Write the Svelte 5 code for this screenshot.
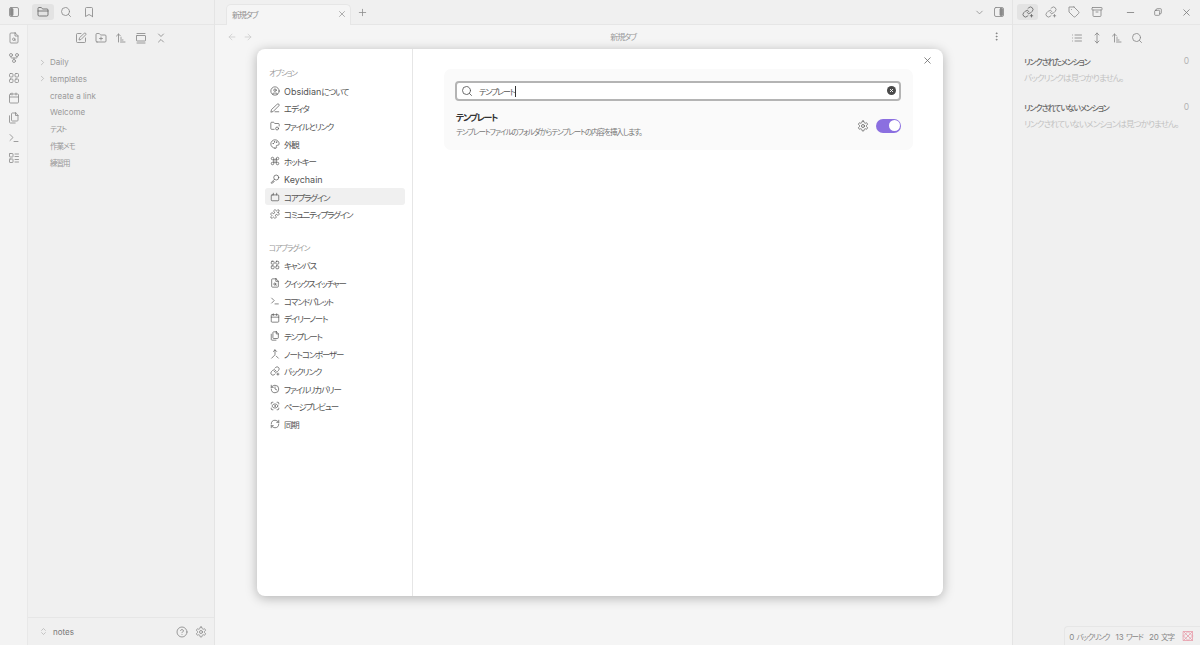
<script>
  const paths = {
    folder: '<path d="M20 20a2 2 0 0 0 2-2V8a2 2 0 0 0-2-2h-7.9a2 2 0 0 1-1.69-.9L9.6 3.9A2 2 0 0 0 7.93 3H4a2 2 0 0 0-2 2v13a2 2 0 0 0 2 2Z"/><path d="M2 10h20"/>',
    search: '<circle cx="11" cy="11" r="8"/><path d="m21 21-4.3-4.3"/>',
    bookmark: '<path d="m19 21-7-4-7 4V5a2 2 0 0 1 2-2h10a2 2 0 0 1 2 2v16z"/>',
    sidebarL: '<rect x="3" y="3" width="18" height="18" rx="3"/><rect x="5" y="5" width="5" height="14" rx="1" fill="currentColor"/>',
    sidebarR: '<rect x="3" y="3" width="18" height="18" rx="3"/><rect x="14" y="5" width="5" height="14" rx="1" fill="currentColor"/>',
    switcher: '<path d="M14.5 2H6a2 2 0 0 0-2 2v16a2 2 0 0 0 2 2h12a2 2 0 0 0 2-2V7.5L14.5 2z"/><path d="M14 2v6h6"/><circle cx="11.5" cy="14.5" r="2.5"/><path d="m13.3 16.3 1.7 1.7"/>',
    graph: '<circle cx="12" cy="18" r="3"/><circle cx="6" cy="6" r="3"/><circle cx="18" cy="6" r="3"/><path d="M18 9v2c0 .6-.4 1-1 1H7c-.6 0-1-.4-1-1V9"/><path d="M12 12v3"/>',
    canvas: '<rect x="3" y="3" width="7" height="7" rx="2"/><rect x="14" y="3" width="7" height="7" rx="2"/><rect x="3" y="14" width="7" height="7" rx="2"/><rect x="14" y="14" width="7" height="7" rx="2"/>',
    calendar: '<rect x="3" y="4" width="18" height="18" rx="2"/><path d="M16 2v4M8 2v4M3 10h18"/>',
    files: '<path d="M15.5 2H8.6c-.4 0-.8.2-1.1.5-.3.3-.5.7-.5 1.1v12.8c0 .4.2.8.5 1.1.3.3.7.5 1.1.5h9.8c.4 0 .8-.2 1.1-.5.3-.3.5-.7.5-1.1V6.5L15.5 2z"/><path d="M3 7.6v12.8c0 .4.2.8.5 1.1.3.3.7.5 1.1.5h9.8"/><path d="M15 2v5h5"/>',
    terminal: '<path d="m4 17 6-6-6-6"/><path d="M12 19h8"/>',
    bases: '<rect x="3" y="3" width="7" height="7" rx="1"/><rect x="3" y="14" width="7" height="7" rx="1"/><path d="M14 4h7M14 9h7M14 15h7M14 20h7"/>',
    edit: '<path d="M12 3H5a2 2 0 0 0-2 2v14a2 2 0 0 0 2 2h14a2 2 0 0 0 2-2v-7"/><path d="M18.375 2.625a2.121 2.121 0 1 1 3 3L12 15l-4 1 1-4Z"/>',
    folderPlus: '<path d="M4 20h16a2 2 0 0 0 2-2V8a2 2 0 0 0-2-2h-7.93a2 2 0 0 1-1.66-.9l-.82-1.2A2 2 0 0 0 7.93 3H4a2 2 0 0 0-2 2v13c0 1.1.9 2 2 2Z"/><path d="M12 10v6M9 13h6"/>',
    sort: '<path d="m3 8 4-4 4 4"/><path d="M7 4v16"/><path d="M11 12h2M11 16h5M11 20h9"/>',
    reveal: '<path d="M4 3h16"/><rect x="3" y="7" width="18" height="11" rx="1"/><path d="M4 22h16"/>',
    collapse: '<path d="m7 20 5-5 5 5"/><path d="m7 4 5 5 5-5"/>',
    chevronRight: '<path d="m9 18 6-6-6-6"/>',
    chevronDown: '<path d="m6 9 6 6 6-6"/>',
    x: '<path d="M18 6 6 18M6 6l12 12"/>',
    plus: '<path d="M5 12h14M12 5v14"/>',
    arrowLeft: '<path d="m12 19-7-7 7-7"/><path d="M19 12H5"/>',
    arrowRight: '<path d="M5 12h14"/><path d="m12 5 7 7-7 7"/>',
    more: '<circle cx="12" cy="5" r="1"/><circle cx="12" cy="12" r="1"/><circle cx="12" cy="19" r="1"/>',
    backlink: '<path d="M10 13a5 5 0 0 0 7.54.54l3-3a5 5 0 0 0-7.07-7.07l-1.72 1.71"/><path d="M14 11a5 5 0 0 0-7.54-.54l-3 3a5 5 0 0 0 7.07 7.07l1.71-1.71"/><path d="M19 17v5M16.5 19.5h5"/>',
    tag: '<path d="M12 2H2v10l9.29 9.29c.94.94 2.48.94 3.42 0l6.58-6.58c.94-.94.94-2.48 0-3.42L12 2Z"/><path d="M7 7h.01"/>',
    archive: '<rect x="2" y="3" width="20" height="5" rx="1"/><path d="M4 8v11a2 2 0 0 0 2 2h12a2 2 0 0 0 2-2V8"/><path d="M10 12h4"/>',
    minus: '<path d="M5 12h14"/>',
    restore: '<rect x="4" y="8" width="12" height="12" rx="2"/><path d="M8 8V6a2 2 0 0 1 2-2h8a2 2 0 0 1 2 2v8a2 2 0 0 1-2 2h-2"/>',
    list: '<path d="M8 6h13M8 12h13M8 18h13M3 6h.01M3 12h.01M3 18h.01"/>',
    updown: '<path d="M12 2v20"/><path d="m8 18 4 4 4-4"/><path d="m8 6 4-4 4 4"/>',
    user: '<circle cx="12" cy="12" r="10"/><circle cx="12" cy="10" r="3"/><path d="M7 20.662V19a2 2 0 0 1 2-2h6a2 2 0 0 1 2 2v1.662"/>',
    pencil: '<path d="M17 3a2.85 2.83 0 1 1 4 4L7.5 20.5 2 22l1.5-5.5Z"/><path d="M12 21h9"/>',
    folderLink: '<path d="M10 20H4a2 2 0 0 1-2-2V5a2 2 0 0 1 2-2h3.93a2 2 0 0 1 1.66.9l.82 1.2a2 2 0 0 0 1.66.9H20a2 2 0 0 1 2 2v4"/><circle cx="17" cy="18" r="3.5"/>',
    palette: '<path d="M12 22a10 10 0 1 1 10-10c0 2-1.5 3-3 3h-2a2 2 0 0 0-1.5 3.3c.4.5.5 1 .5 1.5 0 1.5-1.5 2.2-4 2.2z"/><circle cx="7.5" cy="11" r=".6"/><circle cx="10.5" cy="7" r=".6"/><circle cx="15.5" cy="7.5" r=".6"/>',
    command: '<path d="M15 6v12a3 3 0 1 0 3-3H6a3 3 0 1 0 3 3V6a3 3 0 1 0-3 3h12a3 3 0 1 0-3-3"/>',
    key: '<circle cx="15" cy="8.5" r="6"/><path d="M10.5 13 3 20.5V22h3l1-1v-2h2l1.5-1.5"/>',
    core: '<rect x="3" y="7" width="18" height="14" rx="2"/><path d="M8 3v4M16 3v4"/>',
    puzzle: '<path d="M19.439 7.85c-.049.322.059.648.289.878l1.568 1.568c.47.47.706 1.087.706 1.704s-.235 1.233-.706 1.704l-1.611 1.611a.98.98 0 0 1-.837.276c-.47-.07-.802-.48-.968-.925a2.501 2.501 0 1 0-3.214 3.214c.446.166.855.497.925.968a.979.979 0 0 1-.276.837l-1.61 1.61a2.404 2.404 0 0 1-1.705.707 2.402 2.402 0 0 1-1.704-.706l-1.568-1.568a1.026 1.026 0 0 0-.877-.29c-.493.074-.84.504-1.02.968a2.5 2.5 0 1 1-3.237-3.237c.464-.18.894-.527.967-1.02a1.026 1.026 0 0 0-.289-.877l-1.568-1.568A2.402 2.402 0 0 1 1.998 12c0-.617.236-1.234.706-1.704L4.23 8.77c.24-.24.581-.353.917-.303.515.077.877.528 1.073 1.01a2.5 2.5 0 1 0 3.259-3.259c-.482-.196-.933-.558-1.01-1.073-.05-.336.062-.676.303-.917l1.525-1.525A2.402 2.402 0 0 1 12 1.998c.617 0 1.234.236 1.704.706l1.568 1.568c.23.23.556.338.877.29.493-.074.84-.504 1.02-.968a2.5 2.5 0 1 1 3.237 3.237c-.464.18-.894.527-.967 1.02Z"/>',
    merge: '<path d="m8 6 4-4 4 4"/><path d="M12 2v10.3a4 4 0 0 1-1.172 2.872L4 22"/><path d="m20 22-5-5"/>',
    history: '<path d="M3 12a9 9 0 1 0 9-9 9.75 9.75 0 0 0-6.74 2.74L3 8"/><path d="M3 3v5h5"/><path d="M12 7v5l4 2"/>',
    scanEye: '<path d="M3 7V5a2 2 0 0 1 2-2h2"/><path d="M17 3h2a2 2 0 0 1 2 2v2"/><path d="M21 17v2a2 2 0 0 1-2 2h-2"/><path d="M7 21H5a2 2 0 0 1-2-2v-2"/><circle cx="12" cy="12" r="1"/><path d="M18.944 12.33a1 1 0 0 0 0-.66 7.5 7.5 0 0 0-13.888 0 1 1 0 0 0 0 .66 7.5 7.5 0 0 0 13.888 0"/>',
    refresh: '<path d="M3 12a9 9 0 0 1 9-9 9.75 9.75 0 0 1 6.74 2.74L21 8"/><path d="M21 3v5h-5"/><path d="M21 12a9 9 0 0 1-9 9 9.75 9.75 0 0 1-6.74-2.74L3 16"/><path d="M8 16H3v5"/>',
    help: '<circle cx="12" cy="12" r="10"/><path d="M9.09 9a3 3 0 0 1 5.83 1c0 2-3 3-3 3"/><path d="M12 17h.01"/>',
    gear: '<path d="M12.22 2h-.44a2 2 0 0 0-2 2v.18a2 2 0 0 1-1 1.73l-.43.25a2 2 0 0 1-2 0l-.15-.08a2 2 0 0 0-2.73.73l-.22.38a2 2 0 0 0 .73 2.73l.15.1a2 2 0 0 1 1 1.72v.51a2 2 0 0 1-1 1.74l-.15.09a2 2 0 0 0-.73 2.73l.22.38a2 2 0 0 0 2.73.73l.15-.08a2 2 0 0 1 2 0l.43.25a2 2 0 0 1 1 1.73V20a2 2 0 0 0 2 2h.44a2 2 0 0 0 2-2v-.18a2 2 0 0 1 1-1.73l.43-.25a2 2 0 0 1 2 0l.15.08a2 2 0 0 0 2.73-.73l.22-.39a2 2 0 0 0-.73-2.73l-.15-.08a2 2 0 0 1-1-1.74v-.5a2 2 0 0 1 1-1.74l.15-.09a2 2 0 0 0 .73-2.73l-.22-.38a2 2 0 0 0-2.73-.73l-.15.08a2 2 0 0 1-2 0l-.43-.25a2 2 0 0 1-1-1.73V4a2 2 0 0 0-2-2z"/><circle cx="12" cy="12" r="3"/>',
    vault: '<path d="m7 15 5 5 5-5"/><path d="m7 9 5-5 5 5"/>',
    syncOff: '<rect x="3" y="3" width="18" height="18"/><path d="M3 3l18 18M21 3 3 21M3 12l9-9M12 21l9-9M3 12l9 9M12 3l9 9"/>'
  };

  const ribbon = ['switcher', 'graph', 'canvas', 'calendar', 'files', 'terminal', 'bases'];
  const fileActions = ['edit', 'folderPlus', 'sort', 'reveal', 'collapse'];
  const tree = [
    { name: 'Daily', folder: true },
    { name: 'templates', folder: true },
    { name: 'create a link' },
    { name: 'Welcome' },
    { name: 'テスト' },
    { name: '作業メモ' },
    { name: '練習用' }
  ];
  const options = [
    ['user', 'Obsidianについて'],
    ['pencil', 'エディタ'],
    ['folderLink', 'ファイルとリンク'],
    ['palette', '外観'],
    ['command', 'ホットキー'],
    ['key', 'Keychain'],
    ['core', 'コアプラグイン'],
    ['puzzle', 'コミュニティプラグイン']
  ];
  const corePlugins = [
    ['canvas', 'キャンバス'],
    ['switcher', 'クイックスイッチャー'],
    ['terminal', 'コマンドパレット'],
    ['calendar', 'デイリーノート'],
    ['files', 'テンプレート'],
    ['merge', 'ノートコンポーザー'],
    ['backlink', 'バックリンク'],
    ['history', 'ファイルリカバリー'],
    ['scanEye', 'ページプレビュー'],
    ['refresh', '同期']
  ];
  let query = 'テンプレート';

  // the Japanese runs are set tighter than the latin ones
  function parts(text) {
    return text.split(/([\u3000-\u9fff\uff00-\uffef]+)/).filter(Boolean);
  }
  const isJp = (s) => /[\u3000-\u9fff\uff00-\uffef]/.test(s);
</script>

{#snippet icon(name, size = 12)}
  <svg class="icon" viewBox="0 0 24 24" width={size} height={size} fill="none" stroke="currentColor" stroke-width="1.7" stroke-linecap="round" stroke-linejoin="round">{@html paths[name]}</svg>
{/snippet}

{#snippet label(text)}
  <span class="label">{#each parts(text) as p}<span class:jp={isJp(p)}>{p}</span>{/each}</span>
{/snippet}

<div class="app">
  <aside class="left">
    <div class="titlebar left-bar">
      <span class="ribbon-toggle">{@render icon('sidebarL', 12)}</span>
      <span class="tab-icon active">{@render icon('folder', 12)}</span>
      <span class="tab-icon">{@render icon('search', 12)}</span>
      <span class="tab-icon">{@render icon('bookmark', 12)}</span>
    </div>
    <div class="left-body">
      <nav class="ribbon">
        {#each ribbon as r}
          <span class="ribbon-btn">{@render icon(r, 12)}</span>
        {/each}
      </nav>
      <div class="files">
        <div class="file-actions">
          {#each fileActions as a}
            <span>{@render icon(a, 12)}</span>
          {/each}
        </div>
        <ul class="tree">
          {#each tree as t}
            <li>
              <span class="caret">{#if t.folder}{@render icon('chevronRight', 9)}{/if}</span>
              {@render label(t.name)}
            </li>
          {/each}
        </ul>
        <div class="vault">
          <span class="vault-sw">{@render icon('vault', 9)}</span>
          <span class="vault-name">notes</span>
          <span class="vault-btn">{@render icon('help', 12)}</span>
          <span class="vault-btn">{@render icon('gear', 12)}</span>
        </div>
      </div>
    </div>
  </aside>

  <main class="center">
    <div class="titlebar center-bar">
      <div class="tab">
        {@render label('新規タブ')}
        {@render icon('x', 10)}
      </div>
      <span class="new-tab">{@render icon('plus', 11)}</span>
      <span class="spacer"></span>
      <span class="bar-btn">{@render icon('chevronDown', 11)}</span>
      <span class="bar-btn">{@render icon('sidebarR', 12)}</span>
    </div>
    <div class="nav-row">
      <span class="nav-arrows">
        {@render icon('arrowLeft', 10)}
        {@render icon('arrowRight', 10)}
      </span>
      <span class="view-title">{@render label('新規タブ')}</span>
      <span class="view-more">{@render icon('more', 11)}</span>
    </div>
  </main>

  <aside class="right">
    <div class="titlebar right-bar">
      <span class="rtab active">{@render icon('backlink', 12)}</span>
      <span class="rtab">{@render icon('backlink', 12)}</span>
      <span class="rtab">{@render icon('tag', 12)}</span>
      <span class="rtab">{@render icon('archive', 12)}</span>
      <span class="spacer"></span>
      <span class="win">{@render icon('minus', 11)}</span>
      <span class="win">{@render icon('restore', 10)}</span>
      <span class="win">{@render icon('x', 11)}</span>
    </div>
    <div class="right-actions">
      <span>{@render icon('list', 12)}</span>
      <span>{@render icon('updown', 12)}</span>
      <span>{@render icon('sort', 12)}</span>
      <span>{@render icon('search', 12)}</span>
    </div>
    <section class="mention">
      <div class="mention-head"><b>{@render label('リンクされたメンション')}</b><i>0</i></div>
      <p>バックリンクは見つかりません。</p>
    </section>
    <section class="mention second">
      <div class="mention-head"><b>{@render label('リンクされていないメンション')}</b><i>0</i></div>
      <p>リンクされていないメンションは見つかりません。</p>
    </section>
    <div class="spacer"></div>
    <div class="status">
      <span>{@render label('0 バックリンク')}</span>
      <span>{@render label('13 ワード')}</span>
      <span>{@render label('20 文字')}</span>
      <span class="sync">{@render icon('syncOff', 12)}</span>
    </div>
  </aside>

  <div class="modal">
    <button class="close">{@render icon('x', 11)}</button>
    <div class="modal-side">
      <div class="group-title">{@render label('オプション')}</div>
      {#each options as [ic, text]}
        <div class="opt" class:selected={text === 'コアプラグイン'}>
          {@render icon(ic, 10)}
          {@render label(text)}
        </div>
      {/each}
      <div class="group-title core">{@render label('コアプラグイン')}</div>
      {#each corePlugins as [ic, text]}
        <div class="opt">
          {@render icon(ic, 10)}
          {@render label(text)}
        </div>
      {/each}
    </div>
    <div class="modal-content">
      <div class="panel">
        <div class="search-box">
          {@render icon('search', 12)}
          <span class="query">{@render label(query)}</span><span class="caret-line"></span>
          <span class="spacer"></span>
          <span class="clear">
            <svg viewBox="0 0 12 12" width="9" height="9"><circle cx="6" cy="6" r="6" fill="#4a4a4a" /><path d="M4 4l4 4M8 4l-4 4" stroke="#fff" stroke-width="1.2" /></svg>
          </span>
        </div>
        <div class="plugin">
          <div class="plugin-text">
            <div class="plugin-name">{@render label('テンプレート')}</div>
            <div class="plugin-desc">{@render label('テンプレートファイルのフォルダからテンプレートの内容を挿入します。')}</div>
          </div>
          <span class="plugin-gear">{@render icon('gear', 12)}</span>
          <span class="toggle"><span class="knob"></span></span>
        </div>
      </div>
    </div>
  </div>
</div>

<style>
  :global(body) {
    margin: 0;
    font-family: Inter, "Noto Sans CJK JP", sans-serif;
    font-feature-settings: "palt";
    overflow: hidden;
  }
  .app {
    position: relative;
    display: flex;
    width: 1200px;
    height: 645px;
    overflow: hidden;
    font-size: 8.5px;
    color: #8c8c8c;
    background: #f4f4f4;
  }
  .icon {
    display: block;
    flex: none;
  }
  .spacer {
    flex: 1;
  }
  .jp {
    font-size: 0.94em;
    letter-spacing: -0.14em;
  }
  .titlebar {
    display: flex;
    align-items: center;
    height: 25px;
    flex: none;
    box-sizing: border-box;
    background: #f0f0f0;
    border-bottom: 1px solid #e6e6e6;
    color: #8a8a8a;
  }

  .left {
    width: 215px;
    flex: none;
    display: flex;
    flex-direction: column;
    box-sizing: border-box;
    border-right: 1px solid #e4e4e4;
  }
  .left-bar {
    padding-left: 8px;
  }
  .ribbon-toggle {
    width: 24px;
  }
  .tab-icon {
    width: 22px;
    height: 16px;
    margin-right: 1px;
    display: flex;
    align-items: center;
    justify-content: center;
    border-radius: 3px;
  }
  .tab-icon.active {
    background: #e3e3e3;
    color: #666;
  }
  .left-body {
    flex: 1;
    display: flex;
    min-height: 0;
  }
  .ribbon {
    width: 28px;
    flex: none;
    box-sizing: border-box;
    padding-top: 7px;
    border-right: 1px solid #e8e8e8;
    background: #f3f3f3;
    display: flex;
    flex-direction: column;
    align-items: center;
    gap: 8px;
    color: #8f8f8f;
  }
  .ribbon-btn {
    height: 12px;
  }
  .files {
    flex: 1;
    display: flex;
    flex-direction: column;
    background: #f0f0f0;
  }
  .file-actions {
    display: flex;
    justify-content: center;
    gap: 8px;
    padding-top: 7px;
    color: #8a8a8a;
  }
  .tree {
    list-style: none;
    margin: 10px 0 0;
    padding: 0 0 0 10px;
    flex: 1;
    font-size: 8px;
  }
  .tree li {
    display: flex;
    align-items: center;
    height: 16.65px;
    color: #999;
  }
  .caret {
    width: 12px;
    flex: none;
    color: #a8a8a8;
  }
  .vault {
    height: 27px;
    display: flex;
    align-items: center;
    padding: 0 7px 0 11px;
    border-top: 1px solid #e6e6e6;
    color: #8a8a8a;
    font-size: 8px;
  }
  .vault-sw {
    width: 11px;
    margin-right: 3px;
    color: #aaa;
  }
  .vault-name {
    flex: 1;
    color: #777;
  }
  .vault-btn {
    margin-left: 7px;
  }

  .center {
    flex: 1;
    display: flex;
    flex-direction: column;
    background: #f5f5f5;
  }
  .center-bar {
    padding: 0 7px 0 11px;
    align-items: flex-end;
  }
  .tab {
    width: 125px;
    height: 21px;
    box-sizing: border-box;
    display: flex;
    align-items: center;
    justify-content: space-between;
    padding: 0 3px 2px 5px;
    background: #f5f5f5;
    border: 1px solid #e6e6e6;
    border-bottom: 0;
    border-radius: 5px 5px 0 0;
    margin-bottom: -1px;
    color: #909090;
  }
  .new-tab {
    margin: 0 0 6px 6px;
  }
  .bar-btn {
    margin: 0 0 6px 8px;
  }
  .nav-row {
    height: 23px;
    display: flex;
    align-items: center;
    justify-content: space-between;
    padding: 0 11px 0 12px;
    color: #999;
  }
  .nav-arrows {
    display: flex;
    gap: 6px;
    color: #c8c8c8;
  }
  .view-title {
    margin-left: 2px;
  }
  .view-more {
    color: #777;
    margin-right: -1px;
  }

  .right {
    width: 188px;
    flex: none;
    display: flex;
    flex-direction: column;
    box-sizing: border-box;
    border-left: 1px solid #e4e4e4;
    background: #f0f0f0;
  }
  .right-bar {
    padding: 0 0 0 4px;
  }
  .rtab {
    width: 21px;
    height: 16px;
    margin-right: 2.3px;
    display: flex;
    align-items: center;
    justify-content: center;
    border-radius: 3px;
  }
  .rtab.active {
    background: #e3e3e3;
    color: #666;
  }
  .win {
    width: 28px;
    display: flex;
    justify-content: center;
    color: #777;
  }
  .right-actions {
    display: flex;
    justify-content: center;
    gap: 8px;
    padding-top: 7px;
    color: #8a8a8a;
  }
  .mention {
    padding: 0 11px;
    margin-top: 11px;
  }
  .mention.second {
    margin-top: 17px;
  }
  .mention-head {
    display: flex;
    justify-content: space-between;
    align-items: center;
    height: 12px;
    color: #666;
  }
  .mention-head b {
    font-weight: 500;
  }
  .mention-head i {
    font-style: normal;
    color: #b4b4b4;
  }
  .mention p {
    margin: 5px 0 0;
    line-height: 12px;
    color: #c2c2c2;
    letter-spacing: -0.9px;
    white-space: nowrap;
  }
  .status {
    display: flex;
    align-items: center;
    gap: 6px;
    align-self: flex-end;
    height: 18px;
    padding: 0 6px 0 4px;
    color: #888;
    font-size: 8px;
    border: 1px solid #e6e6e6;
    border-right: 0;
    border-bottom: 0;
    border-radius: 4px 0 0 0;
  }
  .sync {
    color: #e8a0ae;
    margin-left: 2px;
  }

  .modal {
    position: absolute;
    left: 257px;
    top: 49px;
    width: 686px;
    height: 547px;
    display: flex;
    background: #fff;
    border-radius: 8px;
    box-shadow: 0 2px 12px rgba(0, 0, 0, 0.28);
    color: #555;
  }
  .close {
    position: absolute;
    top: 6px;
    right: 10px;
    padding: 0;
    border: 0;
    background: none;
    color: #666;
  }
  .modal-side {
    width: 156px;
    box-sizing: border-box;
    padding: 18px 7px 0 8px;
    border-right: 1px solid #e6e6e6;
  }
  .group-title {
    height: 15px;
    padding-left: 4px;
    font-size: 8px;
    line-height: 12px;
    color: #999;
  }
  .group-title.core {
    margin-top: 18.4px;
  }
  .opt {
    display: flex;
    align-items: center;
    gap: 4px;
    height: 17.65px;
    padding-left: 5px;
    border-radius: 3px;
    font-size: 9px;
  }
  .opt.selected {
    background: #f0f0f0;
  }
  .modal-content {
    flex: 1;
    padding: 20px 30px 0 31px;
  }
  .panel {
    box-sizing: border-box;
    height: 81px;
    padding: 12px 12px 0 11px;
    border-radius: 7px;
    background: #fafafa;
  }
  .search-box {
    display: flex;
    align-items: center;
    height: 20px;
    box-sizing: border-box;
    padding: 0 3px 0 4px;
    background: #fff;
    border: 2px solid #b4b4b4;
    border-radius: 4px;
    color: #555;
  }
  .query {
    margin-left: 6px;
    font-size: 8.5px;
  }
  .caret-line {
    width: 1px;
    height: 11px;
    background: #333;
  }
  .plugin {
    display: flex;
    align-items: center;
    margin-top: 10px;
    padding-left: 1px;
  }
  .plugin-text {
    flex: 1;
  }
  .plugin-name {
    font-size: 9.5px;
    font-weight: 600;
    color: #333;
    line-height: 14px;
  }
  .plugin-desc {
    font-size: 8px;
    color: #777;
    line-height: 14px;
  }
  .plugin-gear {
    color: #666;
    margin-right: 7px;
  }
  .toggle {
    width: 25px;
    height: 14px;
    box-sizing: border-box;
    padding: 1.5px;
    display: flex;
    justify-content: flex-end;
    border-radius: 7px;
    background: #8b6fe0;
  }
  .knob {
    width: 11px;
    height: 11px;
    border-radius: 50%;
    background: #fff;
  }
</style>
